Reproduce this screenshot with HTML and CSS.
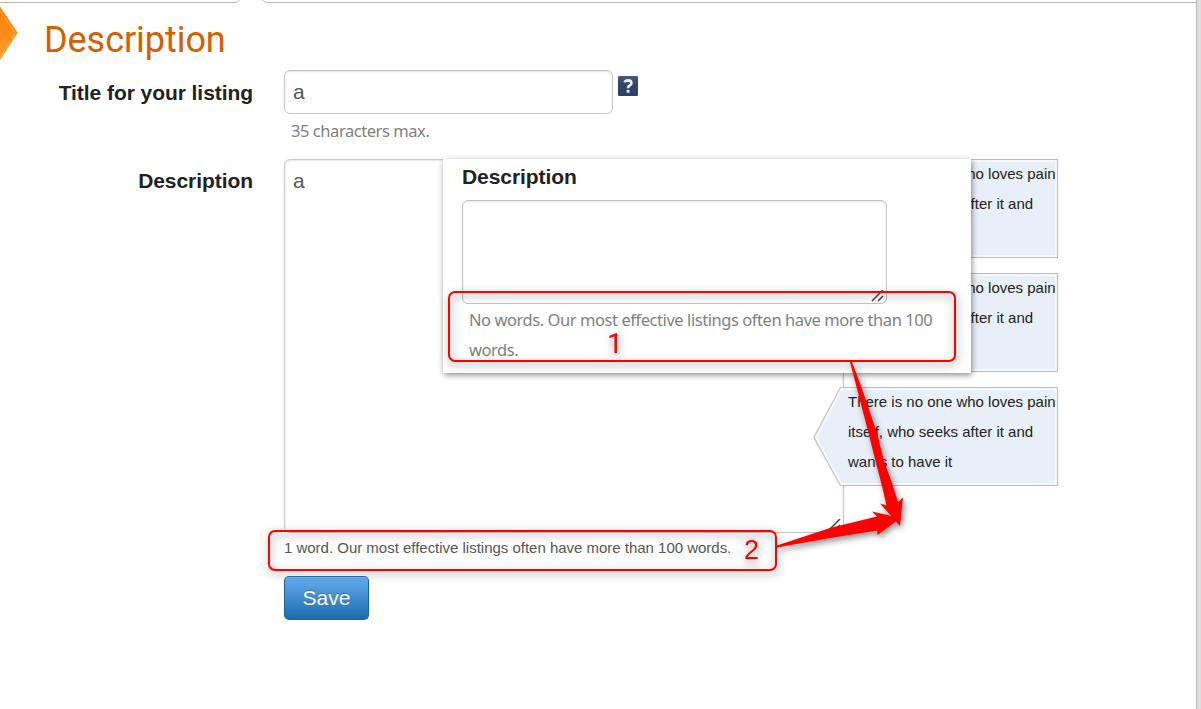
FILE: index.html
```html
<!DOCTYPE html>
<html lang="en">
<head>
<meta charset="utf-8">
<title>Description</title>
<link rel="stylesheet" href="styles.css">
</head>
<body>
<div class="page">
  <svg class="tabs-edge" width="1196" height="4" viewBox="0 0 1196 4"><path d="M0 2.500H235Q238 2.500 240.500 -1M261.500 -1Q264 2.500 267 2.500H1196"/></svg>
  <header class="heading">
    <svg class="arrow" width="20" height="54" viewBox="0 0 20 54">
      <defs><linearGradient id="orange" x1="0" y1="0" x2="0" y2="1"><stop offset="0" stop-color="#ff7c08"/><stop offset="1" stop-color="#ff9d28"/></linearGradient></defs>
      <path d="M0 0L17.500 26L0 53Z" fill="url(#orange)"/><path d="M0 4L15 26L0 50" fill="none" stroke="#ffae55" stroke-width="1"/><path d="M0 0L17.500 26" fill="none" stroke="#e9852d" stroke-width=".7"/>
    </svg>
    <h1>Description</h1>
  </header>
  <form class="form">
    <label class="label" for="title">Title for your listing</label>
    <div class="field">
      <div class="title-row">
        <input class="control title-input" id="title" value="a">
        <svg class="help" width="20" height="20" viewBox="0 0 20 20"><defs><linearGradient id="navy" x1="0" y1="0" x2="0" y2="1"><stop offset="0" stop-color="#48597e"/><stop offset=".45" stop-color="#324468"/><stop offset="1" stop-color="#30426c"/></linearGradient></defs><rect width="20" height="20" rx="1" fill="url(#navy)"/><path d="M6.700 6.300Q7.300 4.300 10.200 4.300Q13.400 4.400 13.400 6.900Q13.400 8.400 11.700 9.400Q10.100 10.300 10 12.200" fill="none" stroke="#eceef3" stroke-width="2.700"/><rect x="8.600" y="13.900" width="2.900" height="2.800" fill="#eceef3"/></svg>
      </div>
      <p class="note limit">35 characters max.</p>
    </div>
    <label class="label label-area" for="description">Description</label>
    <div class="field">
      <div class="description-row">
        <div class="area-wrap">
          <textarea class="control description-input" id="description">a</textarea>
          <svg class="grip" width="14" height="12" viewBox="0 0 14 12"><path d="M1 11L12 0M7 11L12 6"/></svg>
        </div>
        <div class="hints">
          <div class="hint"><svg class="point" width="30" height="99" viewBox="0 0 30 99"><path class="point-fill" d="M30 .5H27.500L1 50.500L27.500 98.500H30"/><path class="point-glow" d="M30 2H28.500L3 50.500L28.500 97H30"/></svg><p>There is no one who loves pain itself, who seeks after it and wants to have it</p></div>
          <div class="hint"><svg class="point" width="30" height="99" viewBox="0 0 30 99"><path class="point-fill" d="M30 .5H27.500L1 50.500L27.500 98.500H30"/><path class="point-glow" d="M30 2H28.500L3 50.500L28.500 97H30"/></svg><p>There is no one who loves pain itself, who seeks after it and wants to have it</p></div>
          <div class="hint"><svg class="point" width="30" height="99" viewBox="0 0 30 99"><path class="point-fill" d="M30 .5H27.500L1 50.500L27.500 98.500H30"/><path class="point-glow" d="M30 2H28.500L3 50.500L28.500 97H30"/></svg><p>There is no one who loves pain itself, who seeks after it and wants to have it</p></div>
        </div>
      </div>
      <p class="count">1 word. Our most effective listings often have more than 100 words.</p>
      <button class="save" type="button">Save</button>
    </div>
  </form>
</div>

<section class="inset">
  <h2>Description</h2>
  <div class="area-wrap inset-wrap">
    <textarea class="control inset-input" aria-label="Description"></textarea>
    <svg class="grip" width="14" height="12" viewBox="0 0 14 12"><path d="M1 11L12 0M7 11L12 6"/></svg>
  </div>
  <p class="note inset-note">No words. Our most effective listings often have more than 100<br>words.</p>
</section>

<div class="callout callout-one"><span class="number number-one">1</span></div>
<div class="callout callout-two"><span class="number number-two">2</span></div>
<svg class="arrows" width="1201" height="709" viewBox="0 0 1201 709">
  <path d="M850 362L852 362L860 383L877 433L884 461L892 483L898 502L903 497.500L900 526L880 503.500L886.500 505.500L882 486L875.500 461L868.500 433Z"/>
  <path d="M777 545.500L830 528L877 516.500L872 511.500L900.500 518L877.500 535L877 530.500L830 538L777 547.500Z"/>
</svg>
</body>
</html>
```
FILE: styles.css
```css
* { box-sizing: border-box; }
body { margin: 0; background: #ddd; font-family: "Liberation Sans", Arial, sans-serif; color: #222; position: relative; }
h1, h2, p { margin: 0; }
.page { width: 1197px; height: 709px; background: #fff; border-right: 1px solid #b8b8b8; overflow: hidden; }
.tabs-edge { display: block; fill: none; stroke: #b8b8b8; stroke-width: 1; }
.heading { display: flex; height: 66px; padding-top: 3px; gap: 24px; }
.heading h1 { font: 400 36px/66px Roboto, sans-serif; color: #d45f00; letter-spacing: -.05px; }
.form { display: grid; grid-template-columns: 253px 1fr; column-gap: 31px; }
.label { text-align: right; font-weight: 700; font-size: 21px; line-height: 30px; padding-top: 8px; color: #222; white-space: nowrap; letter-spacing: -.06px; }
.label-area { padding-top: 7px; }
.control { display: block; margin: 0; border: 1px solid #c4c4c4; border-radius: 6px; background: #fff; box-shadow: inset 0 1px 2px rgba(0,0,0,.1); font: 21px/30px "Liberation Sans", Arial, sans-serif; color: #555; padding: 6px 8px; outline: none; resize: none; overflow: hidden; }
.title-row { display: flex; gap: 5px; }
.title-input { width: 329px; height: 44px; }
.help { margin-top: 6px; }
.note { font-family: "Noto Sans", sans-serif; color: #808080; font-size: 16.5px; line-height: 30px; letter-spacing: -.44px; }
.limit { padding: 2px 0 0 7px; height: 45px; }
.description-row { display: flex; }
.area-wrap { position: relative; width: 560px; height: 374px; }
.description-input { width: 100%; height: 100%; }
.grip { position: absolute; right: 2px; bottom: 2px; fill: none; stroke: #444; stroke-width: 1.5; }
.hints { display: flex; flex-direction: column; gap: 15px; margin-left: -3px; }
.hint { position: relative; width: 217px; height: 99px; border: 1px solid #bbb; border-left: 0; background: #e8eff8; box-shadow: inset -2px 0 #f5f8fc, inset 0 2px #f5f8fc, inset 0 -2px #f5f8fc; padding-left: 7px; font-size: 15px; line-height: 30px; color: #222; }
.hint p { position: relative; width: 209px; margin-top: -1px; }
.point { position: absolute; left: -28px; top: -1px; }
.point-fill { fill: #e8eff8; stroke: #c8c8c8; stroke-width: 1.6; }
.point-glow { fill: none; stroke: #f5f8fc; stroke-width: 2; }
.count { font-size: 15px; line-height: 30px; color: #555; letter-spacing: -.015px; }
.save { display: block; width: 85px; height: 44px; margin: 13px 0 0; padding: 0; border: 1px solid #1965a3; border-top-color: #2b74b2; border-radius: 5px; color: #fff; font: 21px/40px "Liberation Sans", Arial, sans-serif; background: linear-gradient(#67adee, #1b6bae); box-shadow: inset 0 1px rgba(255,255,255,.15); text-shadow: 0 -1px rgba(0,0,0,.25); }
.inset { position: absolute; left: 443px; top: 159px; width: 528px; height: 214px; background: #fff; padding: 3px 19px; box-shadow: 1px 2px 6px rgba(0,0,0,.45); }
.inset h2 { font-size: 21px; line-height: 30px; letter-spacing: -.06px; }
.inset-wrap { width: 425px; height: 104px; margin-top: 8px; }
.inset-input { width: 100%; height: 100%; }
.inset-note { padding: 1px 0 0 7px; white-space: nowrap; }
.callout { position: absolute; border: 2px solid #f00; border-radius: 7px; filter: drop-shadow(1px 3px 4px rgba(0,0,0,.5)); }
.callout-one { left: 448px; top: 291px; width: 508px; height: 71px; }
.callout-two { left: 268px; top: 530px; width: 509px; height: 41px; }
.number { position: absolute; color: #f00; font-size: 27px; line-height: 30px; }
.number-one { left: 157px; top: 36px; font-family: Roboto, sans-serif; font-size: 28px; }
.number-two { left: 474px; top: 3px; }
.arrows { position: absolute; left: 0; top: 0; fill: #f00; filter: drop-shadow(2px 3px 3px rgba(0,0,0,.45)); }
```
